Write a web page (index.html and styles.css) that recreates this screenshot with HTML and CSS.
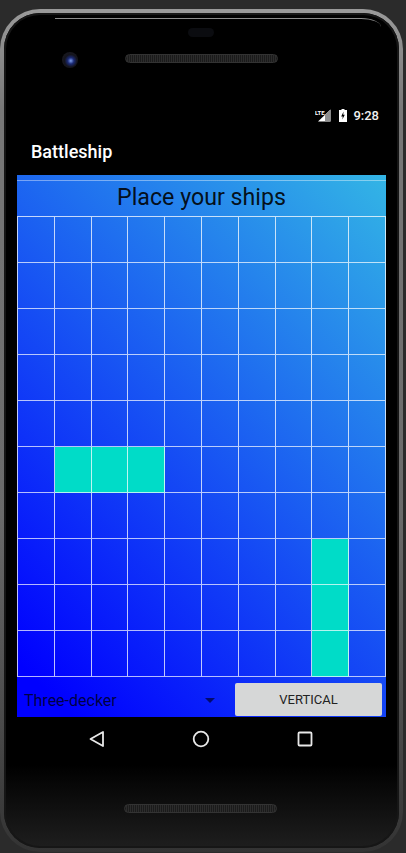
FILE: index.html
```html
<!DOCTYPE html>
<html lang="en">
<head>
  <meta charset="UTF-8">
  <meta name="viewport" content="width=device-width, initial-scale=1.0">
  <title>Battleship</title>
  <link rel="stylesheet" href="styles.css">
</head>
<body>
<div class="phone">
  <div class="glare"></div>
  <div class="sensor"></div>
  <div class="camera"></div>
  <div class="bezel-top">
    <div class="speaker"></div>
  </div>
  <div class="status-bar">
    <svg class="icon-signal" width="16" height="13" viewBox="0 0 16 13">
      <path d="M15.500 0.500V12.500H3Z" fill="#fff"/>
      <path d="M15.500 0.500V12.500H10V6Z" fill="#8f8f8f"/>
      <rect x="0" y="0" width="9" height="6.500" fill="#000"/>
      <text class="lte" x="0" y="6">LTE</text>
    </svg>
    <svg class="icon-battery" width="8" height="13" viewBox="0 0 8 13">
      <path d="M2.500 0H5.500V1H8V13H0V1H2.500Z" fill="#fff"/>
      <path d="M4.600 2.600L2.200 7.400H3.800L3.300 10.600L5.800 5.800H4.200Z" fill="#000"/>
    </svg>
    <span class="clock">9:28</span>
  </div>
  <div class="app-bar">Battleship</div>
  <div class="screen">
    <div class="screen-title">Place your ships</div>
    <div class="board" id="board"></div>
    <div class="controls">
      <div class="spinner">
        <span>Three-decker</span>
        <span class="spinner-arrow"></span>
      </div>
      <button class="toggle">VERTICAL</button>
    </div>
  </div>
  <div class="nav-bar">
    <svg width="18" height="18" viewBox="0 0 18 18"><path d="M15 2V16L2.500 9Z" fill="none" stroke="#e8e8e8" stroke-width="1.800" stroke-linejoin="round"/></svg>
    <svg width="18" height="18" viewBox="0 0 18 18"><circle cx="9" cy="9" r="7.300" fill="none" stroke="#e8e8e8" stroke-width="1.800"/></svg>
    <svg width="18" height="18" viewBox="0 0 18 18"><rect x="2.500" y="2.500" width="13" height="13" rx="1" fill="none" stroke="#e8e8e8" stroke-width="1.800"/></svg>
  </div>
  <div class="bezel-bottom">
    <div class="speaker"></div>
  </div>
</div>

<script>
  // ships already placed, as row,column
  const ships = ['5,1', '5,2', '5,3', '7,8', '8,8', '9,8'];
  const board = document.getElementById('board');

  for (let row = 0; row < 10; row++) {
    for (let col = 0; col < 10; col++) {
      const cell = document.createElement('div');
      cell.className = ships.includes(row + ',' + col) ? 'cell ship' : 'cell';
      board.appendChild(cell);
    }
  }
</script>
</body>
</html>
```

FILE: styles.css
```css
body, html {
  height: 100%;
  margin: 0;
  overflow: hidden;
  background: #2b2b2b;
  font-family: Roboto, "Liberation Sans", sans-serif;
}
.phone {
  position: relative;
  box-sizing: border-box;
  width: 403px;
  height: 843px;
  margin-top: 9px;
  display: flex;
  flex-direction: column;
  padding: 0 13px;
  border: 4px solid transparent;
  border-radius: 40px;
  background: linear-gradient(#000 90%, #1e1e1e 100%) padding-box,
    linear-gradient(#9a9a9a 0, #787878 12%, #6a6a6a 60%, #4a4a4a 85%, #333 100%) border-box;
  box-shadow: inset 0 0 0 2px #161616;
}
.glare {
  position: absolute;
  top: 5px;
  left: 51px;
  right: 18px;
  height: 9px;
  border-top: 1px solid #8c8c8c;
  border-radius: 0 20px 0 0 / 0 9px 0 0;
}
.sensor {
  position: absolute;
  top: 15px;
  left: 184px;
  width: 26px;
  height: 9px;
  border-radius: 5px;
  background: #0b0c10;
}
.camera {
  position: absolute;
  top: 39px;
  left: 58px;
  width: 16px;
  height: 16px;
  border-radius: 50%;
  background: radial-gradient(circle at 55% 55%, #7f9fee 0, #1b2a76 25%, #14141c 50%, #1d1d22 100%);
}
.bezel-top {
  height: 90px;
  display: flex;
  justify-content: center;
  align-items: flex-start;
}
.bezel-top .speaker {
  margin-top: 41px;
}
.speaker {
  box-sizing: border-box;
  width: 153px;
  height: 9px;
  border: 1px solid #333;
  border-radius: 5px;
  background: repeating-linear-gradient(90deg, #1b1b1b 0 1px, #2c2c2c 1px 2px);
}
.status-bar {
  height: 24px;
  display: flex;
  align-items: center;
  justify-content: flex-end;
  padding-right: 7px;
  color: #fff;
  font-size: 13px;
}
.lte {
  fill: #fff;
  font-size: 6px;
  font-weight: 700;
}
.icon-signal {
  margin-right: 8px;
}
.icon-battery {
  margin-right: 6px;
}
.clock {
  font-weight: 500;
  color: #f0f0f0;
}
.app-bar {
  height: 48px;
  display: flex;
  align-items: center;
  padding-left: 14px;
  color: #fff;
  font-size: 18px;
  font-weight: 500;
}
.screen {
  height: 542px;
  display: flex;
  flex-direction: column;
  background: linear-gradient(45deg, #0000ff 6%, #33b5e5 100%);
}
.screen-title {
  box-sizing: border-box;
  height: 41px;
  margin-top: 5px;
  margin-bottom: -5px;
  border-top: 1px solid rgba(255, 255, 255, 0.4);
  padding-bottom: 9px;
  display: flex;
  align-items: center;
  justify-content: center;
  color: rgba(0, 0, 0, 0.9);
  font-size: 23.2px;
}
.board {
  display: grid;
  grid-template-columns: repeat(10, 1fr);
  grid-template-rows: repeat(10, 46px);
  border-top: 1px solid rgba(255, 255, 255, 0.75);
  border-left: 1px solid rgba(255, 255, 255, 0.75);
}
.cell {
  border-right: 1px solid rgba(255, 255, 255, 0.75);
  border-bottom: 1px solid rgba(255, 255, 255, 0.7);
}
.ship {
  background: #00dcc8;
}
.controls {
  flex: 1;
  display: flex;
  align-items: flex-end;
}
.spinner {
  flex: 1;
  height: 34px;
  display: flex;
  align-items: center;
  justify-content: space-between;
  padding: 0 20px 0 7px;
  color: rgba(0, 0, 30, 0.85);
  font-size: 16px;
}
.spinner-arrow {
  width: 0;
  height: 0;
  border-left: 5px solid transparent;
  border-right: 5px solid transparent;
  border-top: 5px solid rgba(0, 0, 50, 0.7);
}
.toggle {
  width: 147px;
  height: 33px;
  margin: 0 4px 1px 0;
  border: 0;
  border-radius: 2px;
  background: #d6d7d7;
  color: #222;
  font-family: inherit;
  font-size: 13px;
  font-weight: 400;
}
.nav-bar {
  height: 44px;
  display: flex;
  align-items: center;
  justify-content: center;
  gap: 86px;
  padding-right: 2px;
}
.bezel-bottom {
  flex: 1;
  display: flex;
  justify-content: center;
  padding-top: 43px;
  padding-right: 3px;
}
```
